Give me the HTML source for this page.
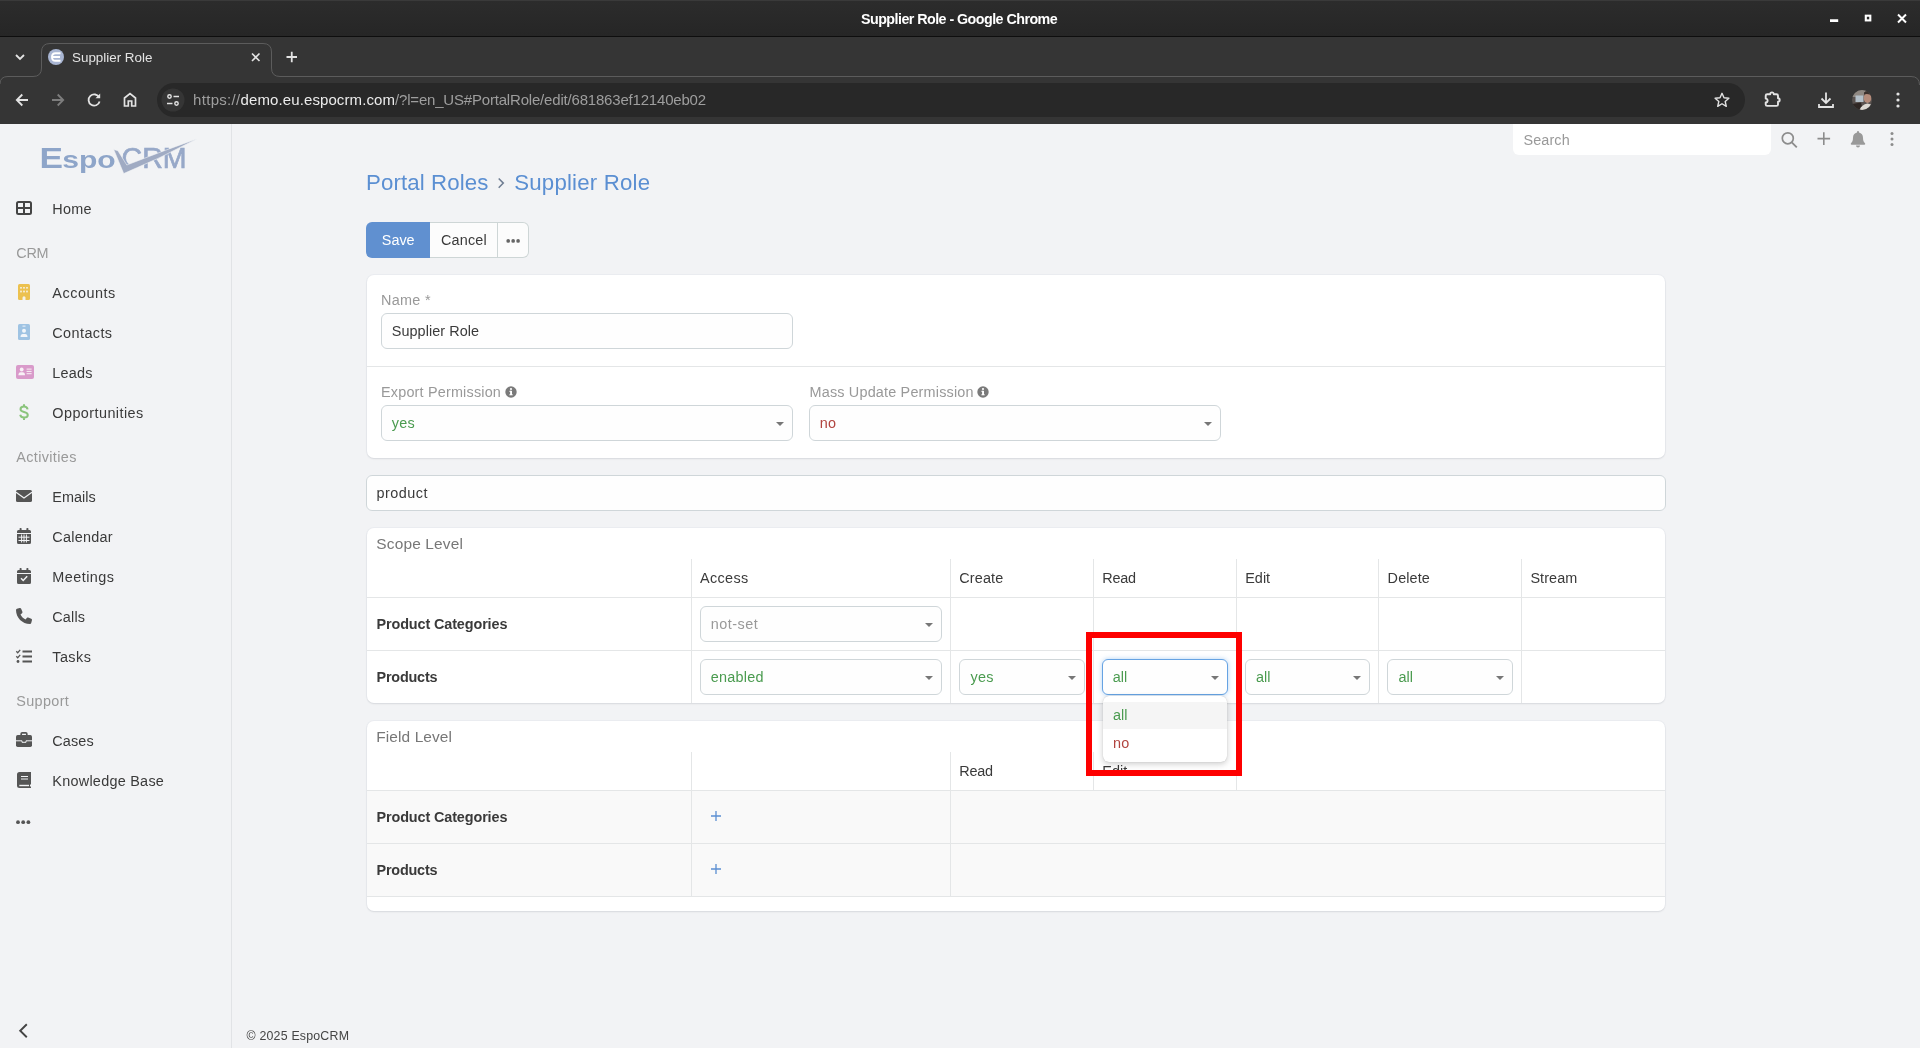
<!DOCTYPE html>
<html lang="en">
<head>
<meta charset="utf-8">
<title>Supplier Role</title>
<style>
*{box-sizing:border-box;margin:0;padding:0}
html,body{width:1920px;height:1048px;overflow:hidden;background:#f2f3f5;font-family:"Liberation Sans",sans-serif;font-size:14px;color:#333}
#root{position:relative;width:1920px;height:1048px;overflow:hidden;will-change:transform}
#root div,#root span,#root svg{position:absolute}
.t{white-space:pre;line-height:20px;height:20px}
/* browser chrome */
#titlebar{left:0;top:0;width:1920px;height:37px;background:linear-gradient(#2c2c2c,#262626);border-top:1px solid #3a3a3a;border-bottom:1px solid #0e0e0e}
#chrometext{left:0;top:0;width:1920px;height:124px}
.title{left:861px;top:9px;color:#fff;font-weight:bold;font-size:14.300px;letter-spacing:-0.550px}
#tabstrip{left:0;top:37px;width:1920px;height:41px;background:#353535}
#toolbar{left:0;top:78px;width:1920px;height:46px;background:#353535}
.tabtitle{left:72px;top:48px;font-size:13.400px;color:#e3e3e3}
.url{left:193px;top:90px;font-size:15px;color:#9e9e9e;letter-spacing:-0.050px}
#root .url i,#root .url b,#root .url u{position:static;font-style:normal;font-weight:normal;text-decoration:none}
.url i{letter-spacing:.320px}
.url b{color:#ececec;letter-spacing:.100px}
.url u{letter-spacing:-.190px}
/* page */
#sidebar{left:0;top:124px;width:232px;height:924px;border-right:1px solid #e1e3e6}
.panel{background:#fff;border-radius:7px;box-shadow:0 0 0 1px rgba(40,70,100,.035),0 1px 2px rgba(0,0,0,.09)}
.inp{background:#fefefe;border:1px solid #cfd6d9;border-radius:6px}
.inp.focus{border-color:#66a3e3;box-shadow:0 0 5px rgba(102,165,233,.5)}
.vl{width:1px;background:#e4e6e7}
.hl{height:1px;background:#e4e6e7}
.caret{width:0;height:0;border-left:4px solid transparent;border-right:4px solid transparent;border-top:4px solid #777}
</style>
</head>
<body>
<div id="root">
<div id="titlebar"></div>
<div id="tabstrip"></div>
<div id="toolbar"></div>
<svg id="chromeicons" style="left:0;top:0" width="1920" height="124" viewBox="0 0 1920 124" fill="none">
<!-- window controls -->
<rect x="1830" y="19.250" width="8.200" height="2.750" fill="#fff"/>
<rect x="1865.800" y="15.700" width="4.500" height="4.700" stroke="#fff" stroke-width="2.100"/>
<path d="M1898 14.500l8 8M1906 14.500l-8 8" stroke="#fff" stroke-width="2"/>
<!-- tab outline -->
<path d="M0 84V84 Q0 76.500 8 76.500H33 Q41.500 76.500 41.500 68V52 Q41.500 43.500 50 43.500H263 Q271.500 43.500 271.500 52V68 Q271.500 76.500 280 76.500H1911 Q1919.500 76.500 1919.500 85" stroke="#5c5c5c" stroke-width="1"/>
<!-- chevron -->
<path d="M16 55l4 4 4-4" stroke="#e3e3e3" stroke-width="1.800"/>
<!-- favicon -->
<circle cx="56" cy="57" r="8" fill="#a9b6d3"/>
<path d="M60.500 53.200H55.500 Q52 53.200 52 57 Q52 60.800 55.500 60.800H60.500M53 57H60" stroke="#fff" stroke-width="1.900"/>
<!-- tab close, new tab -->
<path d="M252 53.500l7.500 7.500M259.500 53.500l-7.500 7.500" stroke="#e3e3e3" stroke-width="1.600"/>
<path d="M286.500 57h10.500M291.750 51.750v10.500" stroke="#e3e3e3" stroke-width="1.800"/>
<!-- back -->
<path d="M28 100H17.300M22.300 94.500l-5.500 5.500 5.500 5.500" stroke="#e3e3e3" stroke-width="1.800"/>
<!-- forward -->
<path d="M52 100H62.700M57.700 94.500l5.500 5.500-5.500 5.500" stroke="#7d7d7d" stroke-width="1.800"/>
<!-- reload -->
<path d="M99.200 97.500A5.600 5.600 0 1 0 99.600 101.500" stroke="#e3e3e3" stroke-width="1.800"/>
<path d="M100.200 93.500v4.700h-4.700z" fill="#e3e3e3"/>
<!-- home -->
<path d="M124.500 106V98l5.500-4.500 5.500 4.500v8h-3.800v-5h-3.400v5z" stroke="#e3e3e3" stroke-width="1.700" stroke-linejoin="miter"/>
<!-- omnibox -->
<rect x="157" y="83" width="1588" height="34" rx="17" fill="#282828"/>
<circle cx="173" cy="100" r="11.500" fill="#353535"/>
<circle cx="169.500" cy="96.500" r="1.700" stroke="#e3e3e3" stroke-width="1.400"/>
<path d="M173.500 96.500H179" stroke="#e3e3e3" stroke-width="1.500"/>
<circle cx="176.500" cy="103.500" r="1.700" stroke="#e3e3e3" stroke-width="1.400"/>
<path d="M167 103.500H172.500" stroke="#e3e3e3" stroke-width="1.500"/>
<!-- star -->
<path d="M1722 93.300l2 4.500 4.900 .45-3.700 3.250 1.100 4.800-4.300-2.550-4.300 2.550 1.100-4.800-3.700-3.250 4.900-.45z" stroke="#e3e3e3" stroke-width="1.400" stroke-linejoin="round"/>
<!-- extensions -->
<path d="M1767.200 94.200H1770.200A1.800 1.800 0 0 1 1773.800 94.200H1776.500Q1778 94.200 1778 95.700V98.300A1.700 1.700 0 0 1 1778 101.700V104.400Q1778 105.900 1776.500 105.900H1767.200Q1765.700 105.900 1765.700 104.400V102.400A1.900 1.900 0 0 0 1765.700 98.600V95.700Q1765.700 94.200 1767.200 94.200Z" stroke="#e3e3e3" stroke-width="1.900" stroke-linejoin="round"/>
<!-- download -->
<path d="M1826 92.500v10M1821.500 98.500l4.500 4.500 4.500-4.500M1819 104v3h14v-3" stroke="#e3e3e3" stroke-width="1.800"/>
<!-- avatar -->
<clipPath id="avc"><circle cx="1862" cy="100" r="10"/></clipPath>
<g clip-path="url(#avc)"><rect x="1852" y="90" width="20" height="20" fill="#5a5350"/>
<path d="M1852 90h14l-3 7h-11z" fill="#8f8882"/>
<rect x="1855.500" y="95.500" width="8" height="6.500" fill="#b4c0c9"/>
<path d="M1852 104l9-1.500 2 8h-11z" fill="#2f2724"/>
<ellipse cx="1867.500" cy="98" rx="3.800" ry="5" fill="#b48b7a"/>
<path d="M1864 92.500q4-3 8 1v3q-3-3.500-8-2z" fill="#3b302c"/>
<path d="M1859.500 110q2-5.500 8-6.500l5 1.500v5z" fill="#dcd8d2"/></g>
<!-- menu -->
<circle cx="1898" cy="94" r="1.600" fill="#e3e3e3"/><circle cx="1898" cy="100" r="1.600" fill="#e3e3e3"/><circle cx="1898" cy="106" r="1.600" fill="#e3e3e3"/>
</svg>
<div id="chrometext"><span class="t title">Supplier Role - Google Chrome</span>
<span class="t tabtitle">Supplier Role</span>
<span class="t url"><i>https://</i><b>demo.eu.espocrm.com</b><u>/?l=en_US#PortalRole/edit/681863ef12140eb02</u></span></div>

<!-- PAGE -->
<div id="sidebar"></div>
<svg style="left:36px;top:132px" width="170" height="50" viewBox="36 132 170 50">
<g font-family="Liberation Sans, sans-serif" font-weight="bold">
<text x="39.500" y="167.700" font-size="29.400" fill="#8ea5c9" textLength="23.500" lengthAdjust="spacingAndGlyphs">E</text>
<text x="62.200" y="167.700" font-size="23.600" fill="#8ea5c9" textLength="53.500" lengthAdjust="spacingAndGlyphs">spo</text>
<text x="121.600" y="167.700" font-size="29.400" font-weight="normal" fill="#97a8c8" stroke="#97a8c8" stroke-width=".700" textLength="65" lengthAdjust="spacingAndGlyphs">CRM</text>
</g>
<path d="M113.700 149.400 L117.900 150.700 L126.800 165 L161 151.900 L197.200 138.700 L161 157 L123.700 173.600 Z" fill="#a0abc3" stroke="#f2f3f5" stroke-width=".600" stroke-linejoin="round"/>
</svg>
<span class="t" style="left:52.3px;top:199px;font-size:14.42px;letter-spacing:0.277px;color:#3a3a3a;">Home</span>
<span class="t" style="left:52.3px;top:283px;font-size:14.42px;letter-spacing:0.525px;color:#3a3a3a;">Accounts</span>
<span class="t" style="left:52.3px;top:323px;font-size:14.42px;letter-spacing:0.418px;color:#3a3a3a;">Contacts</span>
<span class="t" style="left:52.3px;top:363px;font-size:14.42px;letter-spacing:0.231px;color:#3a3a3a;">Leads</span>
<span class="t" style="left:52.3px;top:403px;font-size:14.42px;letter-spacing:0.435px;color:#3a3a3a;">Opportunities</span>
<span class="t" style="left:52.3px;top:487px;font-size:14.42px;letter-spacing:0.031px;color:#3a3a3a;">Emails</span>
<span class="t" style="left:52.3px;top:527px;font-size:14.42px;letter-spacing:0.244px;color:#3a3a3a;">Calendar</span>
<span class="t" style="left:52.3px;top:567px;font-size:14.42px;letter-spacing:0.461px;color:#3a3a3a;">Meetings</span>
<span class="t" style="left:52.3px;top:607px;font-size:14.42px;letter-spacing:0.156px;color:#3a3a3a;">Calls</span>
<span class="t" style="left:52.3px;top:647px;font-size:14.42px;letter-spacing:0.431px;color:#3a3a3a;">Tasks</span>
<span class="t" style="left:52.3px;top:731px;font-size:14.42px;letter-spacing:0.138px;color:#3a3a3a;">Cases</span>
<span class="t" style="left:52.3px;top:771px;font-size:14.42px;letter-spacing:0.265px;color:#3a3a3a;">Knowledge Base</span>
<span class="t" style="left:16.3px;top:243px;font-size:14.42px;letter-spacing:-0.307px;color:#999;">CRM</span>
<span class="t" style="left:16.3px;top:447px;font-size:14.42px;letter-spacing:0.358px;color:#999;">Activities</span>
<span class="t" style="left:16.3px;top:691px;font-size:14.42px;letter-spacing:0.344px;color:#999;">Support</span>
<span class="t" style="left:246.5px;top:1026px;font-size:12.36px;letter-spacing:0.203px;color:#444;">© 2025 EspoCRM</span>
<svg id="navicons" style="left:0;top:124px" width="232" height="924" viewBox="0 124 232 924" fill="none">
<!-- home -->
<rect x="17" y="202" width="14" height="12" rx="1.500" stroke="#444" stroke-width="2"/><path d="M24 202v12M17 208h14" stroke="#444" stroke-width="2"/>
<!-- accounts -->
<rect x="18" y="284" width="12" height="16" rx="1.500" fill="#ecc14f"/>
<g fill="#f6f3ea"><rect x="20.200" y="287" width="1.600" height="1.600"/><rect x="23.200" y="287" width="1.600" height="1.600"/><rect x="26.200" y="287" width="1.600" height="1.600"/><rect x="20.200" y="290.600" width="1.600" height="1.800"/><rect x="23.200" y="290.600" width="1.600" height="1.800"/><rect x="26.200" y="290.600" width="1.600" height="1.800"/><path d="M22.500 300v-2.300a1.500 1.500 0 0 1 3 0v2.300z"/></g>
<!-- contacts -->
<rect x="18" y="324" width="12" height="16" rx="1.500" fill="#9fc3e3"/>
<g fill="#f2f6fa"><rect x="22.500" y="325.600" width="3" height="1"/><circle cx="24" cy="330.700" r="2"/><path d="M20.500 336.900q0-2.900 2.400-2.900h2.200q2.400 0 2.400 2.900z"/></g>
<!-- leads -->
<rect x="16" y="365" width="18" height="14" rx="2" fill="#d99aca"/>
<g fill="#f8f1f6"><circle cx="21.700" cy="369.500" r="1.900"/><path d="M18.400 375.200q0-3 2.300-3h2q2.300 0 2.300 3z"/><rect x="26.600" y="368.600" width="5" height="1"/><rect x="26.600" y="370.900" width="5" height="1"/><rect x="26.600" y="373.200" width="5" height="1"/></g>
<!-- opportunities -->
<path d="M27.600 409.400C27.200 407.400 25.900 406.600 24 406.600C21.800 406.600 20.500 407.700 20.500 409.300C20.500 413.100 27.800 410.900 27.800 415C27.800 416.600 26.300 417.600 24 417.600C21.900 417.600 20.600 416.700 20.200 414.800M24 404.200V406.600M24 417.600V420" stroke="#8bc47c" stroke-width="2"/>
<!-- emails -->
<rect x="16" y="490" width="16" height="12" rx="1.600" fill="#555"/><path d="M16 492.300l8 5.800 8-5.800" stroke="#f2f3f5" stroke-width="1.200"/>
<!-- calendar -->
<path d="M17 531.500a1.500 1.500 0 0 1 1.500-1.500h11a1.500 1.500 0 0 1 1.500 1.500v11a1.500 1.500 0 0 1-1.500 1.500h-11a1.500 1.500 0 0 1-1.500-1.500z" fill="#555"/><rect x="19.600" y="528" width="2" height="3.500" rx=".7" fill="#555"/><rect x="26.400" y="528" width="2" height="3.500" rx=".7" fill="#555"/>
<path d="M17 533.500h14M18.500 537.200h11M18.500 540.500h11M21.600 534.500v8M24 534.500v8M26.400 534.500v8" stroke="#f2f3f5" stroke-width="1"/>
<!-- meetings -->
<path d="M17 571.500a1.500 1.500 0 0 1 1.500-1.500h11a1.500 1.500 0 0 1 1.500 1.500v11a1.500 1.500 0 0 1-1.500 1.500h-11a1.500 1.500 0 0 1-1.500-1.500z" fill="#555"/><rect x="19.600" y="568" width="2" height="3.500" rx=".7" fill="#555"/><rect x="26.400" y="568" width="2" height="3.500" rx=".7" fill="#555"/>
<path d="M17 573.500h14" stroke="#f2f3f5" stroke-width="1"/><path d="M21 578.300l2.200 2.200 4-4.200" stroke="#f2f3f5" stroke-width="1.500"/>
<!-- calls -->
<path transform="translate(16 608) scale(.03125)" fill="#555" d="M164.900 24.600c-7.700-18.600-28-28.500-47.400-23.200l-88 24C12.100 30.200 0 46 0 64C0 311.400 200.600 512 448 512c18 0 33.800-12.100 38.600-29.500l24-88c5.300-19.400-4.600-39.700-23.200-47.400l-96-40c-16.300-6.800-35.200-2.100-46.300 11.600L304.700 368C234.300 334.700 177.300 277.700 144 207.300L193.300 167c13.700-11.200 18.400-30 11.600-46.300l-40-96z"/>
<!-- tasks -->
<path d="M22.500 651.500H32M22.500 656.500H32M22.500 661.500H32" stroke="#555" stroke-width="1.900"/><path d="M16.300 651.300l1.400 1.400 2.500-2.800M16.300 656.300l1.400 1.400 2.500-2.800" stroke="#555" stroke-width="1.300"/><circle cx="18" cy="661.500" r="1.400" fill="#555"/>
<!-- cases -->
<path d="M21.200 735.500v-1.700a1 1 0 0 1 1-1h3.600a1 1 0 0 1 1 1v1.700" stroke="#555" stroke-width="1.700"/><rect x="16" y="735" width="16" height="12" rx="1.700" fill="#555"/><path d="M16 740.800h6v1.500h4v-1.500h6" stroke="#f2f3f5" stroke-width="1"/>
<!-- knowledge base -->
<path d="M17 774.500a2.500 2.500 0 0 1 2.500-2.500H31v12.500h-1v2h1v1.500H19.500a2.500 2.500 0 0 1-2.500-2.500z" fill="#555"/><path d="M21 776.500h7M21 779h7" stroke="#f2f3f5" stroke-width="1"/><path d="M19.300 785.500h9.700" stroke="#f2f3f5" stroke-width="1.400"/>
<!-- more -->
<circle cx="18" cy="822.200" r="1.900" fill="#555"/><circle cx="23.200" cy="822.200" r="1.900" fill="#555"/><circle cx="28.400" cy="822.200" r="1.900" fill="#555"/>
<!-- collapse -->
<path d="M26.800 1024.300l-6.600 6.500 6.600 6.500" stroke="#444" stroke-width="1.900"/>
</svg>
<div style="left:1513px;top:124px;width:258px;height:31px;background:#fff;border-radius:0 0 6px 6px"></div>
<span class="t" style="left:1523.4px;top:130px;font-size:14.42px;letter-spacing:0.135px;color:#999;">Search</span>
<svg id="topicons" style="left:1776px;top:124px" width="144" height="32" viewBox="1776 124 144 32" fill="none">
<circle cx="1787.800" cy="138.300" r="5.500" stroke="#8c8c8c" stroke-width="1.700"/><path d="M1791.800 142.300l5 5" stroke="#8c8c8c" stroke-width="1.900"/>
<path d="M1817.500 138.600h12.600M1823.800 132.300v12.600" stroke="#8c8c8c" stroke-width="1.600"/>
<path d="M1858 131a1 1 0 0 1 1 1v.6c2.500.5 4 2.600 4 5.200 0 3 .8 4.300 2 5.500.5.500.2 1.400-.6 1.400h-12.800c-.8 0-1.100-.9-.6-1.400 1.200-1.200 2-2.500 2-5.500 0-2.600 1.500-4.700 4-5.200V132a1 1 0 0 1 1-1zM1856 145.600h4a2 2 0 0 1-4 0z" fill="#999"/>
<circle cx="1892" cy="133.600" r="1.500" fill="#8c8c8c"/><circle cx="1892" cy="139.100" r="1.500" fill="#8c8c8c"/><circle cx="1892" cy="144.600" r="1.500" fill="#8c8c8c"/>
</svg>
<span class="t" style="left:366px;top:173px;font-size:22.24px;letter-spacing:0.122px;color:#5b8fd2;">Portal Roles</span>
<span class="t" style="left:514.3px;top:173px;font-size:22.24px;letter-spacing:0.189px;color:#5b8fd2;">Supplier Role</span>
<svg style="left:494px;top:174px" width="14" height="18" viewBox="494 174 14 18" fill="none"><path d="M498.700 178.500l4.600 4.600-4.600 4.600" stroke="#6f7d92" stroke-width="1.500"/></svg>
<div style="left:366px;top:222px;width:64px;height:36px;background:#6090d0;border-radius:6px 0 0 6px"></div>
<div style="left:430px;top:222px;width:99px;height:36px;background:#fcfcfc;border:1px solid #ced6d6;border-left:0;border-radius:0 6px 6px 0"></div>
<div style="left:497px;top:223px;width:1px;height:34px;background:#ced6d6"></div>
<span class="t" style="left:381.8px;top:230px;font-size:14.42px;letter-spacing:-0.016px;color:#fff;">Save</span>
<span class="t" style="left:441px;top:230px;font-size:14.42px;letter-spacing:0.18px;color:#3a3a3a;">Cancel</span>
<svg style="left:504px;top:236px" width="20" height="10" viewBox="504 236 20 10"><circle cx="508.200" cy="240.900" r="1.850" fill="#666"/><circle cx="513.150" cy="240.900" r="1.850" fill="#666"/><circle cx="518.100" cy="240.900" r="1.850" fill="#666"/></svg>
<div class="panel" style="left:367px;top:275px;width:1298px;height:183px;"></div>
<div class="hl" style="left:367px;top:366px;width:1298px;height:1px;"></div>
<span class="t" style="left:381px;top:290px;font-size:14.42px;letter-spacing:0.292px;color:#999;">Name *</span>
<div class="inp" style="left:381px;top:313px;width:412px;height:36px;"></div>
<span class="t" style="left:391.8px;top:321px;font-size:14.42px;letter-spacing:0.062px;color:#3a3a3a;">Supplier Role</span>
<span class="t" style="left:381px;top:382px;font-size:14.42px;letter-spacing:0.186px;color:#999;">Export Permission</span>
<span class="t" style="left:809.5px;top:382px;font-size:14.42px;letter-spacing:0.185px;color:#999;">Mass Update Permission</span>
<svg style="left:503.5px;top:384.8px" width="14" height="14" viewBox="-7 -7 14 14"><circle r="5.700" fill="#7a7a7a"/><rect x="-0.900" y="-1.200" width="1.900" height="4.200" fill="#fff"/><rect x="-1.600" y="2.300" width="3.300" height="1" fill="#fff"/><rect x="-1.600" y="-1.200" width="1.600" height="1" fill="#fff"/><circle cy="-3" r="1.100" fill="#fff"/></svg>
<svg style="left:976.3px;top:384.8px" width="14" height="14" viewBox="-7 -7 14 14"><circle r="5.700" fill="#7a7a7a"/><rect x="-0.900" y="-1.200" width="1.900" height="4.200" fill="#fff"/><rect x="-1.600" y="2.300" width="3.300" height="1" fill="#fff"/><rect x="-1.600" y="-1.200" width="1.600" height="1" fill="#fff"/><circle cy="-3" r="1.100" fill="#fff"/></svg>
<div class="inp" style="left:381px;top:405px;width:412px;height:36px;"></div>
<span class="t" style="left:391.7px;top:413px;font-size:14.42px;letter-spacing:0.245px;color:#4a9b4f;">yes</span>
<div class="caret" style="left:775.5px;top:422px;width:8px;height:4px;"></div>
<div class="inp" style="left:809px;top:405px;width:412px;height:36px;"></div>
<span class="t" style="left:819.7px;top:413px;font-size:14.42px;letter-spacing:0.32px;color:#b1443f;">no</span>
<div class="caret" style="left:1203.5px;top:422px;width:8px;height:4px;"></div>
<div class="inp" style="left:366px;top:475px;width:1300px;height:36px;border-radius:6px"></div>
<span class="t" style="left:376.5px;top:483px;font-size:14.42px;letter-spacing:0.482px;color:#3a3a3a;">product</span>
<div class="panel" style="left:367px;top:528px;width:1298px;height:175px;"></div>
<span class="t" style="left:376.3px;top:534px;font-size:15.45px;letter-spacing:0.166px;color:#777;">Scope Level</span>
<div class="vl" style="left:691px;top:559px;width:1px;height:144px;"></div>
<div class="vl" style="left:950px;top:559px;width:1px;height:144px;"></div>
<div class="vl" style="left:1093px;top:559px;width:1px;height:144px;"></div>
<div class="vl" style="left:1236px;top:559px;width:1px;height:144px;"></div>
<div class="vl" style="left:1378px;top:559px;width:1px;height:144px;"></div>
<div class="vl" style="left:1521px;top:559px;width:1px;height:144px;"></div>
<div class="hl" style="left:367px;top:597px;width:1298px;height:1px;"></div>
<div class="hl" style="left:367px;top:650px;width:1298px;height:1px;"></div>
<span class="t" style="left:700px;top:568px;font-size:14.42px;letter-spacing:0.362px;color:#3a3a3a;">Access</span>
<span class="t" style="left:959.3px;top:568px;font-size:14.42px;letter-spacing:0.13px;color:#3a3a3a;">Create</span>
<span class="t" style="left:1102.3px;top:568px;font-size:14.42px;letter-spacing:-0.227px;color:#3a3a3a;">Read</span>
<span class="t" style="left:1245.2px;top:568px;font-size:14.42px;letter-spacing:0.035px;color:#3a3a3a;">Edit</span>
<span class="t" style="left:1387.6px;top:568px;font-size:14.42px;letter-spacing:0.13px;color:#3a3a3a;">Delete</span>
<span class="t" style="left:1530.4px;top:568px;font-size:14.42px;letter-spacing:0.099px;color:#3a3a3a;">Stream</span>
<span class="t" style="left:376.5px;top:614px;font-size:14.42px;letter-spacing:-0.116px;color:#3a3a3a;font-weight:bold;">Product Categories</span>
<span class="t" style="left:376.5px;top:667px;font-size:14.42px;letter-spacing:-0.205px;color:#3a3a3a;font-weight:bold;">Products</span>
<div class="inp" style="left:700px;top:606px;width:242px;height:36px;"></div>
<span class="t" style="left:710.7px;top:614px;font-size:14.42px;letter-spacing:0.5px;color:#999;">not-set</span>
<div class="caret" style="left:924.5px;top:623px;width:8px;height:4px;"></div>
<div class="inp" style="left:700px;top:659px;width:242px;height:36px;"></div>
<span class="t" style="left:710.7px;top:667px;font-size:14.42px;letter-spacing:0.246px;color:#4a9b4f;">enabled</span>
<div class="caret" style="left:924.5px;top:676px;width:8px;height:4px;"></div>
<div class="inp" style="left:959px;top:659px;width:126px;height:36px;"></div>
<span class="t" style="left:970.6px;top:667px;font-size:14.42px;letter-spacing:0.245px;color:#4a9b4f;">yes</span>
<div class="caret" style="left:1067.5px;top:676px;width:8px;height:4px;"></div>
<div class="inp" style="left:1245px;top:659px;width:125px;height:36px;"></div>
<span class="t" style="left:1256px;top:667px;font-size:14.42px;letter-spacing:0.078px;color:#4a9b4f;">all</span>
<div class="caret" style="left:1352.5px;top:676px;width:8px;height:4px;"></div>
<div class="inp" style="left:1387px;top:659px;width:126px;height:36px;"></div>
<span class="t" style="left:1398.4px;top:667px;font-size:14.42px;letter-spacing:0.078px;color:#4a9b4f;">all</span>
<div class="caret" style="left:1495.5px;top:676px;width:8px;height:4px;"></div>
<div class="panel" style="left:367px;top:721px;width:1298px;height:190px;"></div>
<div style="left:367px;top:791px;width:1298px;height:105px;background:#f9f9f9"></div>
<span class="t" style="left:376.3px;top:727px;font-size:15.45px;letter-spacing:0.097px;color:#777;">Field Level</span>
<div class="vl" style="left:691px;top:752px;width:1px;height:144px;"></div>
<div class="vl" style="left:950px;top:752px;width:1px;height:144px;"></div>
<div class="vl" style="left:1093px;top:752px;width:1px;height:38px;"></div>
<div class="vl" style="left:1236px;top:752px;width:1px;height:38px;"></div>
<div class="hl" style="left:367px;top:790px;width:1298px;height:1px;"></div>
<div class="hl" style="left:367px;top:843px;width:1298px;height:1px;"></div>
<div class="hl" style="left:367px;top:896px;width:1298px;height:1px;"></div>
<span class="t" style="left:959.3px;top:761px;font-size:14.42px;letter-spacing:-0.227px;color:#3a3a3a;">Read</span>
<span class="t" style="left:1102.3px;top:761px;font-size:14.42px;letter-spacing:0.035px;color:#3a3a3a;">Edit</span>
<span class="t" style="left:376.5px;top:807px;font-size:14.42px;letter-spacing:-0.116px;color:#3a3a3a;font-weight:bold;">Product Categories</span>
<span class="t" style="left:376.5px;top:860px;font-size:14.42px;letter-spacing:-0.205px;color:#3a3a3a;font-weight:bold;">Products</span>
<svg style="left:709px;top:808.8px" width="14" height="14" viewBox="-7 -7 14 14"><path d="M-5 0H5M0-5V5" stroke="#5b8fd2" stroke-width="1.300"/></svg>
<svg style="left:709px;top:861.8px" width="14" height="14" viewBox="-7 -7 14 14"><path d="M-5 0H5M0-5V5" stroke="#5b8fd2" stroke-width="1.300"/></svg>
<div class="inp focus" style="left:1102px;top:659px;width:126px;height:36px;"></div>
<span class="t" style="left:1112.7px;top:667px;font-size:14.42px;letter-spacing:0.078px;color:#4a9b4f;">all</span>
<div class="caret" style="left:1210.5px;top:676px;width:8px;height:4px;"></div>
<div style="left:1103px;top:696px;width:124px;height:66px;background:#fff;border-radius:6px;box-shadow:0 2px 6px rgba(0,0,0,.2),0 0 1px rgba(0,0,0,.25)"></div>
<div style="left:1103px;top:701.5px;width:124px;height:27.7px;background:#f5f5f5"></div>
<span class="t" style="left:1113px;top:705px;font-size:14.42px;letter-spacing:0.078px;color:#4a9b4f;">all</span>
<span class="t" style="left:1113px;top:733px;font-size:14.42px;letter-spacing:0.32px;color:#b1443f;">no</span>
<div style="left:1086px;top:632px;width:156px;height:144px;border:6px solid #fe0000"></div>
</div>
</body>
</html>
